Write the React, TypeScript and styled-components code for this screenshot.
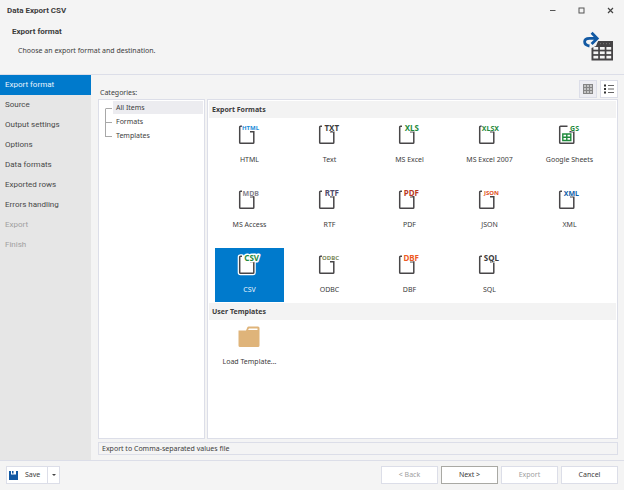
import React, { useState } from "react";
import styled, { createGlobalStyle, css } from "styled-components";

const line = "#dcdee8";
const blue = "#007acc";

const GlobalStyle = createGlobalStyle`
  * { box-sizing: border-box; }
  body { margin: 0; background: #f4f4f4; }
  button { font: inherit; color: inherit; padding: 0; margin: 0; border: 0; background: none; border-radius: 0; }
`;

const Window = styled.div`
  min-height: 100vh;
  display: flex;
  flex-direction: column;
  background: #f4f4f4;
  color: #3c3c3c;
  font: 7px/10px "Noto Sans", "Open Sans", sans-serif;
`;

const Header = styled.header`
  display: flex;
  justify-content: space-between;
  height: 75px;
  border-bottom: 1px solid ${line};
`;

const Titles = styled.div`
  padding: 5px 0 0 7px;
`;

const Title = styled.h1`
  margin: 0;
  font-family: Roboto, "Noto Sans", sans-serif;
  font-size: 8px;
  line-height: 12px;
`;

const PageTitle = styled.h2`
  margin: 9px 0 0 5px;
  font-family: Roboto, "Noto Sans", sans-serif;
  font-size: 8px;
  line-height: 12px;
`;

const Hint = styled.p`
  margin: 8px 0 0 11px;
`;

const HeaderSide = styled.div`
  display: flex;
  flex-direction: column;
  align-items: flex-end;
  justify-content: space-between;
  padding: 6px 9px 13px 0;
`;

const WindowButtons = styled.div`
  display: flex;
  gap: 20px;

  button { display: flex; }
`;

const Body = styled.div`
  flex: 1;
  display: flex;
`;

const Sidebar = styled.nav`
  width: 91px;
  flex: none;
  display: flex;
  flex-direction: column;
  background: #e6e6e6;
`;

const Step = styled.button<{ $active?: boolean }>`
  height: 20px;
  padding: 0 5px;
  text-align: left;
  font-family: Roboto, "Noto Sans", sans-serif;
  font-size: 8px;
  background: ${(p) => (p.$active ? blue : "transparent")};
  color: ${(p) => (p.$active ? "#e8f4fd" : "#484848")};

  &:disabled { color: #a0a0a0; }
`;

const Main = styled.main`
  flex: 1;
  min-width: 0;
  display: flex;
  flex-direction: column;
  padding: 5px 6px 5px 7px;
`;

const Toolbar = styled.div`
  display: flex;
  justify-content: space-between;
  align-items: flex-end;
  height: 19px;
`;

const CategoriesLabel = styled.span`
  padding: 0 0 1px 2px;
`;

const Toggles = styled.div`
  display: flex;
  gap: 3px;
  margin-bottom: 1px;
`;

const Toggle = styled.button`
  width: 18px;
  height: 18px;
  display: flex;
  align-items: center;
  justify-content: center;
  border: 1px solid ${line};
  background: #fff;

  &[aria-pressed="true"] { background: #ededf2; }
`;

const Panels = styled.div`
  flex: 1;
  display: flex;
  gap: 2px;
`;

const panel = css`
  border: 1px solid ${line};
  background: #fff;
`;

const Tree = styled.div`
  ${panel}
  width: 107px;
  flex: none;
  padding: 1px;
`;

const TreeList = styled.ul`
  margin: 0;
  padding: 0 0 0 5px;
  list-style: none;
`;

const TreeItem = styled.li<{ $first?: boolean; $last?: boolean }>`
  display: grid;
  grid-template-columns: 8px 1fr;
  height: 14px;

  &::before {
    content: "";
    height: 7px;
    width: 6px;
    border-left: 1px solid ${(p) => (p.$first ? "transparent" : "#a8a8a8")};
    border-bottom: 1px solid #a8a8a8;
  }

  &::after {
    content: "";
    grid-row: 2;
    height: 7px;
    width: 6px;
    border-left: 1px solid ${(p) => (p.$last ? "transparent" : "#a8a8a8")};
  }
`;

const TreeButton = styled.button<{ $active?: boolean }>`
  grid-row: 1 / 3;
  grid-column: 2;
  height: 13px;
  padding: 0 3px;
  text-align: left;
  background: ${(p) => (p.$active ? "#ececf0" : "transparent")};
`;

const FormatPanel = styled.div`
  ${panel}
  flex: 1;
  min-width: 0;
  padding: 1px;
`;

const GroupTitle = styled.h3`
  margin: 0;
  padding: 0 3px;
  font-size: 7px;
  line-height: 17px;
  background: #f3f3f3;
`;

const Tiles = styled.div`
  display: grid;
  grid-template-columns: repeat(auto-fill, 69px);
  gap: 11px;
  padding: 0 0 1px 6px;
`;

const Tile = styled.button<{ $active?: boolean }>`
  height: 54px;
  display: flex;
  flex-direction: column;
  align-items: center;
  gap: 9px;
  padding-top: 6px;
  white-space: nowrap;
  background: ${(p) => (p.$active ? blue : "transparent")};
  color: ${(p) => (p.$active ? "#e8f4fd" : "inherit")};
`;

const IconText = styled.text<{ $size: number }>`
  font: bold ${(p) => p.$size}px "Noto Sans", sans-serif;
  text-anchor: end;
  paint-order: stroke;
  stroke-linejoin: round;
`;

const StatusBar = styled.div`
  margin-top: 3px;
  height: 13px;
  padding: 0 3px;
  line-height: 12px;
  border: 1px solid ${line};
`;

const Footer = styled.footer`
  display: flex;
  justify-content: space-between;
  height: 30px;
  padding: 5px 6px;
  border-top: 1px solid ${line};
`;

const SplitButton = styled.div`
  display: flex;
  height: 18px;
  border: 1px solid ${line};
  background: #fff;
`;

const SaveButton = styled.button`
  display: flex;
  align-items: center;
  gap: 7px;
  padding: 0 7px 0 2px;
`;

const SaveMenuButton = styled.button`
  width: 12px;
  display: flex;
  align-items: center;
  justify-content: center;
  border-left: 1px solid ${line};
`;

const Actions = styled.div`
  display: flex;
  gap: 3px;
`;

const Action = styled.button<{ $default?: boolean }>`
  width: 57px;
  height: 18px;
  border: 1px solid ${(p) => (p.$default ? "#a9a9a4" : line)};
  background: #fff;

  &:disabled { color: #a0a0a0; }
`;

type Format = { name: string; tag: string; color: string; size: number };

const formats: Format[] = [
  { name: "HTML", tag: "HTML", color: "#1a8bd8", size: 6 },
  { name: "Text", tag: "TXT", color: "#3c3c3c", size: 8 },
  { name: "MS Excel", tag: "XLS", color: "#1f8a3c", size: 8 },
  { name: "MS Excel 2007", tag: "XLSX", color: "#1f8a3c", size: 7 },
  { name: "Google Sheets", tag: "GS", color: "#1f8a3c", size: 7 },
  { name: "MS Access", tag: "MDB", color: "#85838f", size: 7 },
  { name: "RTF", tag: "RTF", color: "#504c6c", size: 8 },
  { name: "PDF", tag: "PDF", color: "#b8391f", size: 8 },
  { name: "JSON", tag: "JSON", color: "#e04e1c", size: 6 },
  { name: "XML", tag: "XML", color: "#0f5ea8", size: 7 },
  { name: "CSV", tag: "CSV", color: "#1f8a3c", size: 8 },
  { name: "ODBC", tag: "ODBC", color: "#7c8a5c", size: 6 },
  { name: "DBF", tag: "DBF", color: "#ee5a24", size: 8 },
  { name: "SQL", tag: "SQL", color: "#3c3c3c", size: 8 },
];

const steps = [
  "Export format", "Source", "Output settings", "Options", "Data formats",
  "Exported rows", "Errors handling", "Export", "Finish",
];

const categories = ["All Items", "Formats", "Templates"];

function FormatIcon({ format, selected }: { format: Format; selected: boolean }) {
  const sheet = format.tag === "GS";
  const outline = sheet
    ? "M9.5 2.3H2.5Q1.7 2.3 1.7 3.1V18.5Q1.7 19.3 2.5 19.3H15Q15.8 19.3 15.8 18.5V7.7H11.5"
    : "M4 2.3H2.5Q1.7 2.3 1.7 3.1V18.5Q1.7 19.3 2.5 19.3H15Q15.8 19.3 15.8 18.5V7.7H12";
  return (
    <svg width="23" height="22" viewBox="0 0 23 22" overflow="visible" aria-hidden="true">
      {selected && (
        <path d={outline + "L4 3Z"} fill="#fff" stroke="#fff" strokeWidth="4" strokeLinejoin="round" />
      )}
      <path d={outline} fill="none" stroke="#484648" strokeWidth="1.5" />
      {sheet && (
        <path d="M4.8 10H12.8V16.5H4.8ZM4.8 13.2H12.8M8.8 10V16.5" fill="none" stroke="#1f8a3c" strokeWidth="1.4" />
      )}
      <IconText $size={format.size} x="21" y={format.size > 6 ? 7 : 6} fill={format.color} stroke="#fff" strokeWidth={selected ? 3 : 1}>
        {format.tag}
      </IconText>
    </svg>
  );
}

const arrow = "M6.5 15C0 14 0 7.4 6.5 7.4H14M8.6 1.8L14.2 7.4L8.6 13";

function ExportTableIcon() {
  return (
    <svg width="32" height="30" viewBox="0 0 32 30" aria-hidden="true">
      <path d="M15 10H30V29.5H8.5V17L13 15Z" fill="#454345" />
      <path d="M17 12.7H29" stroke="#888" strokeWidth=".8" strokeDasharray="1 2" />
      <g fill="#f4f4f4">
        {[16, 20.4, 24.8].map((y) =>
          [10.4, 16.9, 23.4].map((x) => <rect key={`${x}-${y}`} x={x} y={y} width="4.8" height="2.7" />)
        )}
      </g>
      <path d={arrow} fill="none" stroke="#f4f4f4" strokeWidth="5" />
      <path d={arrow} fill="none" stroke="#1259a3" strokeWidth="2.8" />
    </svg>
  );
}

export default function App() {
  const [step, setStep] = useState("Export format");
  const [category, setCategory] = useState("All Items");
  const [format, setFormat] = useState("CSV");
  const [view, setView] = useState("grid");

  return (
    <Window>
      <GlobalStyle />
      <Header>
        <Titles>
          <Title>Data Export CSV</Title>
          <PageTitle>Export format</PageTitle>
          <Hint>Choose an export format and destination.</Hint>
        </Titles>
        <HeaderSide>
          <WindowButtons>
            <button aria-label="Minimize">
              <svg width="9" height="9"><path d="M2 4.5H7.5" stroke="#555" /></svg>
            </button>
            <button aria-label="Maximize">
              <svg width="9" height="9"><rect x="2" y="2" width="5" height="5" fill="none" stroke="#555" /></svg>
            </button>
            <button aria-label="Close">
              <svg width="9" height="9"><path d="M2 2L7 7M7 2L2 7" stroke="#444" strokeWidth="1.2" /></svg>
            </button>
          </WindowButtons>
          <ExportTableIcon />
        </HeaderSide>
      </Header>
      <Body>
        <Sidebar>
          {steps.map((s, i) => (
            <Step key={s} $active={s === step} disabled={i > 6} onClick={() => setStep(s)}>{s}</Step>
          ))}
        </Sidebar>
        <Main>
          <Toolbar>
            <CategoriesLabel id="categories">Categories:</CategoriesLabel>
            <Toggles>
              <Toggle aria-label="Icons" aria-pressed={view === "grid"} onClick={() => setView("grid")}>
                <svg width="10" height="10">
                  <rect x=".5" y=".5" width="9" height="9" fill="#c4c4c4" stroke="#858585" />
                  <path d="M.5 3.5H9.5M.5 6.5H9.5M3.5 .5V9.5M6.5 .5V9.5" stroke="#858585" />
                </svg>
              </Toggle>
              <Toggle aria-label="List" aria-pressed={view === "list"} onClick={() => setView("list")}>
                <svg width="10" height="10">
                  <path d="M0 1.5H2M0 5H2M0 8.5H2" stroke="#333" strokeWidth="2" />
                  <path d="M4 1.5H10M4 5H10M4 8.5H10" stroke="#666" />
                </svg>
              </Toggle>
            </Toggles>
          </Toolbar>
          <Panels>
            <Tree>
              <TreeList aria-labelledby="categories">
                {categories.map((c, i) => (
                  <TreeItem key={c} $first={i === 0} $last={i === categories.length - 1}>
                    <TreeButton $active={c === category} onClick={() => setCategory(c)}>{c}</TreeButton>
                  </TreeItem>
                ))}
              </TreeList>
            </Tree>
            <FormatPanel>
              <GroupTitle>Export Formats</GroupTitle>
              <Tiles>
                {formats.map((f) => (
                  <Tile key={f.name} $active={f.name === format} onClick={() => setFormat(f.name)}>
                    <FormatIcon format={f} selected={f.name === format} />
                    {f.name}
                  </Tile>
                ))}
              </Tiles>
              <GroupTitle>User Templates</GroupTitle>
              <Tiles>
                <Tile>
                  <svg width="23" height="22" viewBox="0 0 23 22" aria-hidden="true">
                    <path d="M.5 4.5H8L9.5 1Q9.8 .5 10.5 .5H20Q21.5 .5 21.5 2V19.5Q21.5 21 20 21H2Q.5 21 .5 19.5Z" fill="#dfb47a" />
                    <path d="M10 4L11 2.5H19.5V4Z" fill="#fff" />
                  </svg>
                  Load Template...
                </Tile>
              </Tiles>
            </FormatPanel>
          </Panels>
          <StatusBar>Export to Comma-separated values file</StatusBar>
        </Main>
      </Body>
      <Footer>
        <SplitButton>
          <SaveButton>
            <svg width="9" height="9" viewBox="0 0 9 9" aria-hidden="true">
              <path d="M0 0H2V3.5H7V0H9V9H0Z" fill="#1259a3" />
              <path d="M3 0H4.5V2.5H3Z" fill="#1259a3" />
            </svg>
            Save
          </SaveButton>
          <SaveMenuButton aria-label="More save options">
            <svg width="4" height="2"><path d="M0 0H4L2 2Z" fill="#444" /></svg>
          </SaveMenuButton>
        </SplitButton>
        <Actions>
          <Action disabled>&lt; Back</Action>
          <Action $default>Next &gt;</Action>
          <Action disabled>Export</Action>
          <Action>Cancel</Action>
        </Actions>
      </Footer>
    </Window>
  );
}
